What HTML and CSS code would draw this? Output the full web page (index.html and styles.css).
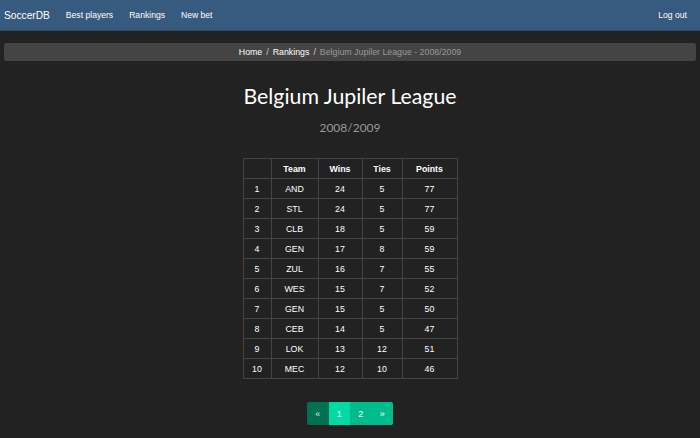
FILE: index.html
```html
<!DOCTYPE html>
<html>
<head>
<meta charset="utf-8">
<link rel="stylesheet" href="styles.css">
</head>
<body>
<nav class="navbar">
  <div class="nav-left">
    <a class="brand" href="#">SoccerDB</a>
    <a class="nav-link" href="#">Best players</a>
    <a class="nav-link" href="#">Rankings</a>
    <a class="nav-link" href="#">New bet</a>
  </div>
  <a class="nav-link logout" href="#">Log out</a>
</nav>
<main class="container">
  <ol class="breadcrumb">
    <li><a href="#">Home</a></li>
    <li class="sep">/</li>
    <li><a href="#">Rankings</a></li>
    <li class="sep">/</li>
    <li class="current">Belgium Jupiler League - 2008/2009</li>
  </ol>
  <h1 class="title">Belgium Jupiler League</h1>
  <p class="subtitle">2008/2009</p>
  <table class="ranking">
    <thead>
      <tr><th class="c-rank"></th><th class="c-team">Team</th><th class="c-wins">Wins</th><th class="c-ties">Ties</th><th class="c-pts">Points</th></tr>
    </thead>
    <tbody>
      <tr><td>1</td><td>AND</td><td>24</td><td>5</td><td>77</td></tr>
      <tr><td>2</td><td>STL</td><td>24</td><td>5</td><td>77</td></tr>
      <tr><td>3</td><td>CLB</td><td>18</td><td>5</td><td>59</td></tr>
      <tr><td>4</td><td>GEN</td><td>17</td><td>8</td><td>59</td></tr>
      <tr><td>5</td><td>ZUL</td><td>16</td><td>7</td><td>55</td></tr>
      <tr><td>6</td><td>WES</td><td>15</td><td>7</td><td>52</td></tr>
      <tr><td>7</td><td>GEN</td><td>15</td><td>5</td><td>50</td></tr>
      <tr><td>8</td><td>CEB</td><td>14</td><td>5</td><td>47</td></tr>
      <tr><td>9</td><td>LOK</td><td>13</td><td>12</td><td>51</td></tr>
      <tr><td>10</td><td>MEC</td><td>12</td><td>10</td><td>46</td></tr>
    </tbody>
  </table>
  <ul class="pagination">
    <li class="page disabled">&laquo;</li>
    <li class="page active">1</li>
    <li class="page">2</li>
    <li class="page">&raquo;</li>
  </ul>
</main>
</body>
</html>
```

FILE: styles.css
```css
* { box-sizing: border-box; }
html, body {
  margin: 0;
  padding: 0;
  background: #222222;
  color: #ffffff;
  font-family: "Liberation Sans", Arial, sans-serif;
  font-size: 9px;
}
a { color: #ffffff; text-decoration: none; }

.navbar {
  height: 31px;
  background: #375a7f;
  border-bottom: 1px solid #2d4a68;
  display: flex;
  align-items: center;
  justify-content: space-between;
  padding: 0 13px 0 4px;
}
.nav-left { display: flex; align-items: center; }
.brand {
  font-size: 10.2px;
  margin-right: 8px;
}
.nav-link {
  font-size: 8.6px;
  padding: 0 8px;
}
.logout { padding-right: 0; }

.container {
  padding: 12px 4px 0 4px;
}
.breadcrumb {
  list-style: none;
  margin: 0;
  height: 18px;
  background: #444444;
  border-radius: 2px;
  display: flex;
  justify-content: center;
  align-items: center;
  gap: 4px;
  padding: 0;
  font-size: 8.8px;
}
.breadcrumb .sep { color: #cccccc; }
.breadcrumb .current { color: #999999; }

.title {
  font-family: Lato, "Liberation Sans", sans-serif;
  font-weight: 400;
  font-size: 21.3px;
  text-align: center;
  margin: 22px 0 0 0;
  line-height: 27px;
}
.subtitle {
  font-family: Lato, "Liberation Sans", sans-serif;
  font-size: 12px;
  color: #999999;
  text-align: center;
  margin: 11px 0 0 0;
  line-height: 14px;
}

.ranking {
  margin: 23px auto 0 auto;
  border-collapse: collapse;
  font-size: 8.8px;
}
.ranking th, .ranking td {
  border: 1px solid #444444;
  height: 20px;
  padding: 0;
  text-align: center;
  vertical-align: middle;
}
.ranking th { font-weight: bold; }
.c-rank { width: 28px; }
.c-team { width: 47px; }
.c-wins { width: 44px; }
.c-ties { width: 40px; }
.c-pts { width: 55px; }

.pagination {
  list-style: none;
  display: flex;
  justify-content: center;
  margin: 23px 0 0 0;
  padding: 0;
}
.page {
  width: 21.5px;
  height: 23px;
  display: flex;
  align-items: center;
  justify-content: center;
  background: #00bc8c;
  color: #ffffff;
  font-size: 9px;
}
.page:first-child { border-radius: 2px 0 0 2px; }
.page:last-child { border-radius: 0 2px 2px 0; }
.page.disabled { background: #007053; color: #cfe; }
.page.active { background: #00dba3; }
```
